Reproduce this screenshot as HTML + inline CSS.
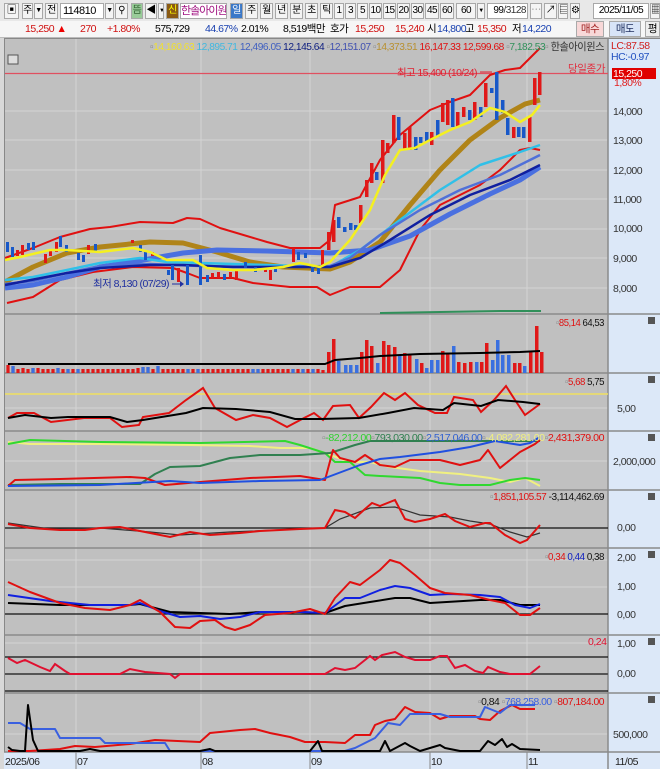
<!DOCTYPE html>
<html><head><meta charset="utf-8"><style>
*{margin:0;padding:0;box-sizing:border-box}
body{width:660px;height:769px;overflow:hidden;background:#f0f0f0;font-family:"Liberation Sans","Noto Sans CJK KR","NanumGothic",sans-serif;font-size:10.5px;letter-spacing:-0.5px;position:relative}
.a{position:absolute;white-space:nowrap;line-height:14px}
.b{position:absolute;top:3px;height:16px;border:1px solid #a8a8a8;background:#f4f4f4;text-align:center;line-height:14px;font-size:10px;overflow:hidden;white-space:nowrap}
svg{position:absolute;left:0;top:0}
svg text{font-family:"Liberation Sans","Noto Sans CJK KR",sans-serif;font-size:10.5px;letter-spacing:-0.5px}
</style></head><body>
<div style="position:absolute;left:0;top:0;width:660px;height:21px;background:#e8e8e8"></div>
<div class="b" style="left:4px;width:15px">▣</div>
<div class="b" style="left:22px;width:11px">주</div>
<div class="b" style="left:34px;width:9px;font-size:7px">▼</div>
<div class="b" style="left:45px;width:13px">전</div>
<div class="b" style="left:60px;width:44px;background:#fff;text-align:left;padding-left:2px;font-size:11px">114810</div>
<div class="b" style="left:105px;width:9px;font-size:7px">▼</div>
<div class="b" style="left:115px;width:13px">⚲</div>
<div class="b" style="left:131px;width:12px;background:#9c9;color:#363">뜸</div>
<div class="b" style="left:145px;width:12px">◀</div>
<div class="b" style="left:158px;width:6px;font-size:6px">▼</div>
<div class="b" style="left:166px;width:13px;background:#8a5a14;color:#ff0">신</div>
<div class="b" style="left:180px;width:47px;background:#fff;color:#a01080;font-size:11px;letter-spacing:-1px">한솔아이원</div>
<div class="b" style="left:230px;width:13px;background:#3a78c8;color:#fff">일</div>
<div class="b" style="left:245px;width:13px">주</div>
<div class="b" style="left:260px;width:13px">월</div>
<div class="b" style="left:275px;width:13px">년</div>
<div class="b" style="left:290px;width:13px">분</div>
<div class="b" style="left:305px;width:13px">초</div>
<div class="b" style="left:320px;width:13px">틱</div>
<div class="b" style="left:334px;width:10px">1</div>
<div class="b" style="left:345px;width:11px">3</div>
<div class="b" style="left:357px;width:11px">5</div>
<div class="b" style="left:369px;width:13px">10</div>
<div class="b" style="left:383px;width:13px">15</div>
<div class="b" style="left:397px;width:13px">20</div>
<div class="b" style="left:411px;width:13px">30</div>
<div class="b" style="left:425px;width:14px">45</div>
<div class="b" style="left:440px;width:14px">60</div>
<div class="b" style="left:456px;width:20px">60</div>
<div class="b" style="left:477px;width:8px;font-size:6px">▼</div>
<div class="b" style="left:487px;width:41px;background:#fff;text-align:right;padding-right:1px">99<span style="color:#333">/3128</span></div>
<div class="b" style="left:530px;width:12px;color:#999">⋯</div>
<div class="b" style="left:544px;width:13px">↗</div>
<div class="b" style="left:558px;width:10px">▤</div>
<div class="b" style="left:570px;width:10px">⚙</div>
<div class="b" style="left:593px;width:56px;background:#fff">2025/11/05</div>
<div class="b" style="left:650px;width:10px">▦</div>
<div style="position:absolute;left:0;top:21px;width:660px;height:17px;background:#f6f6f6;border-bottom:1px solid #bbb"></div>
<div class="a" style="left:25px;top:22px;color:#d01010">15,250 <span style="color:#e00">▲</span></div>
<div class="a" style="left:80px;top:22px;color:#d01010">270</div>
<div class="a" style="left:107px;top:22px;color:#d01010">+1.80%</div>
<div class="a" style="left:155px;top:22px">575,729</div>
<div class="a" style="left:205px;top:22px;color:#1840b0">44.67%</div>
<div class="a" style="left:241px;top:22px">2.01%</div>
<div class="a" style="left:283px;top:22px">8,519백만</div>
<div class="a" style="left:330px;top:22px">호가</div>
<div class="a" style="left:355px;top:22px;color:#d01010">15,250</div>
<div class="a" style="left:395px;top:22px;color:#d01010">15,240</div>
<div class="a" style="left:427px;top:22px">시</div>
<div class="a" style="left:437px;top:22px;color:#1840b0">14,800</div>
<div class="a" style="left:465px;top:22px">고</div>
<div class="a" style="left:477px;top:22px;color:#d01010">15,350</div>
<div class="a" style="left:512px;top:22px">저</div>
<div class="a" style="left:522px;top:22px;color:#1840b0">14,220</div>
<div class="a" style="left:576px;top:21px;width:28px;height:16px;background:#f8d8d8;border:1px solid #aaa;text-align:center;color:#a02020">매수</div>
<div class="a" style="left:609px;top:21px;width:32px;height:16px;background:#d8e4f8;border:1px solid #aaa;text-align:center;color:#203060">매도</div>
<div class="a" style="left:645px;top:21px;width:15px;height:16px;background:#eee;border:1px solid #aaa;text-align:center">평</div>

<svg width="660" height="769" viewBox="0 0 660 769" style="top:0">
<rect x="0" y="38" width="660" height="731" fill="#e0e0e0"/>
<rect x="4" y="39" width="604" height="713" fill="#c0c0c0"/>
<rect x="608" y="39" width="52" height="730" fill="#dce8f8"/>
<rect x="0" y="752" width="660" height="17" fill="#dce8f8"/>
<g stroke="#d4d4d4" stroke-width="1">
<line x1="76" y1="39" x2="76" y2="752"/><line x1="201" y1="39" x2="201" y2="752"/><line x1="310" y1="39" x2="310" y2="752"/><line x1="430" y1="39" x2="430" y2="752"/><line x1="527" y1="39" x2="527" y2="752"/>
<line x1="4" y1="111" x2="608" y2="111"/><line x1="4" y1="140" x2="608" y2="140"/><line x1="4" y1="170" x2="608" y2="170"/><line x1="4" y1="199" x2="608" y2="199"/><line x1="4" y1="229" x2="608" y2="229"/><line x1="4" y1="258" x2="608" y2="258"/><line x1="4" y1="288" x2="608" y2="288"/>
<line x1="4" y1="461" x2="608" y2="461"/><line x1="4" y1="587" x2="608" y2="587"/><line x1="4" y1="560" x2="608" y2="560"/><line x1="4" y1="643" x2="608" y2="643"/><line x1="4" y1="734" x2="608" y2="734"/><line x1="4" y1="408" x2="608" y2="408"/>
</g>
<g stroke="#8a8a8a" stroke-width="1.5">
<line x1="0" y1="314" x2="660" y2="314"/><line x1="0" y1="373" x2="660" y2="373"/><line x1="0" y1="431" x2="660" y2="431"/><line x1="0" y1="490" x2="660" y2="490"/><line x1="0" y1="548" x2="660" y2="548"/><line x1="0" y1="635" x2="660" y2="635"/><line x1="0" y1="693" x2="660" y2="693"/><line x1="0" y1="752" x2="660" y2="752"/>
<line x1="608" y1="39" x2="608" y2="769"/>
</g>
<line x1="0" y1="38.5" x2="660" y2="38.5" stroke="#888"/>
<line x1="4" y1="73.5" x2="608" y2="73.5" stroke="#e05060" stroke-width="1.3"/>
<rect x="8" y="55" width="10" height="9" fill="#ddd" stroke="#555"/>

<g fill="none" stroke-linejoin="round">
<polyline stroke="#e01010" stroke-width="2" points="5,258 33,248 60,237 90,229 110,227 140,222 173,223 187,218 200,219 220,228 267,242 290,248 320,248 330,240 335,205 360,197 380,160 400,135 430,110 450,102 470,95 490,75 505,70 520,68 540,48"/>
<polyline stroke="#e01010" stroke-width="2" points="7,303 33,297 60,280 93,272 133,267 173,268 187,273 200,278 233,278 253,283 290,287 317,287 330,295 350,287 380,287 400,270 420,230 440,205 460,195 480,185 500,170 520,150 530,148 540,150"/>
<polyline stroke="#b08418" stroke-width="5" points="5,282 33,267 67,253 100,247 150,242 183,243 217,252 250,262 283,267 330,269 350,262 380,242 410,205 440,170 470,140 500,118 525,104 540,100"/>
<polyline stroke="#4a70e0" stroke-width="5" points="5,288 33,285 67,277 100,267 133,262 160,257 183,253 217,250 267,251 330,253 370,250 410,236 450,214 490,194 520,180 540,167"/>
<polyline stroke="#30c0e8" stroke-width="2.5" points="5,280 33,277 67,270 100,263 140,258 167,262 200,263 267,265 330,267 360,250 400,220 440,190 480,165 520,152 540,145"/>
<polyline stroke="#5070d8" stroke-width="2.5" points="5,284 33,281 67,273 100,266 150,264 200,266 267,267 330,266 350,258 380,235 420,210 460,190 500,175 540,155"/>
<polyline stroke="#1020a0" stroke-width="2.5" points="5,285 67,273 100,268 150,265 183,265 233,267 283,267 330,267 360,258 390,240 430,215 470,195 510,180 540,165"/>
</g>
<g>
<g fill="#1858c8">
<rect x="6" y="242" width="3" height="10"/><rect x="11" y="247" width="3" height="10"/><rect x="27" y="243" width="3" height="7"/><rect x="32" y="242" width="3" height="8"/><rect x="59" y="236" width="3" height="11"/><rect x="65" y="245" width="3" height="7"/><rect x="77" y="253" width="3" height="7"/><rect x="82" y="255" width="3" height="7"/><rect x="94" y="244" width="3" height="8"/><rect x="139" y="245" width="3" height="7"/><rect x="144" y="250" width="3" height="10"/><rect x="167" y="270" width="3" height="5"/><rect x="171" y="265" width="3" height="15"/><rect x="186" y="265" width="3" height="20"/><rect x="199" y="255" width="3" height="30"/><rect x="206" y="275" width="3" height="7"/><rect x="223" y="274" width="3" height="6"/><rect x="244" y="262" width="3" height="6"/><rect x="254" y="267" width="3" height="5"/><rect x="274" y="268" width="3" height="4"/><rect x="297" y="252" width="3" height="8"/><rect x="304" y="253" width="3" height="5"/><rect x="311" y="265" width="3" height="7"/><rect x="317" y="268" width="3" height="6"/>
<rect x="337" y="217" width="3.5" height="11"/><rect x="343" y="227" width="3.5" height="5"/><rect x="349" y="223" width="3.5" height="7"/><rect x="354" y="225" width="3.5" height="5"/><rect x="375" y="172" width="3.5" height="8"/><rect x="397" y="117" width="3.5" height="23"/><rect x="414" y="137" width="3.5" height="13"/><rect x="419" y="137" width="3.5" height="6"/><rect x="425" y="132" width="3.5" height="10"/><rect x="436" y="120" width="3.5" height="17"/><rect x="451" y="98" width="3.5" height="29"/><rect x="468" y="110" width="3.5" height="10"/><rect x="479" y="107" width="3.5" height="10"/><rect x="490" y="88" width="3.5" height="5"/><rect x="495" y="72" width="3.5" height="48"/><rect x="501" y="100" width="3.5" height="13"/><rect x="506" y="118" width="3.5" height="17"/><rect x="517" y="127" width="3.5" height="10"/><rect x="522" y="127" width="3.5" height="11"/>
</g>
<g fill="#e01818">
<rect x="16" y="250" width="3" height="6"/><rect x="21" y="245" width="3" height="10"/><rect x="44" y="254" width="3" height="9"/><rect x="49" y="251" width="3" height="5"/><rect x="55" y="242" width="3" height="10"/><rect x="87" y="245" width="3" height="9"/><rect x="131" y="240" width="3" height="3"/><rect x="151" y="252" width="3" height="4"/><rect x="177" y="268" width="3" height="14"/><rect x="211" y="273" width="3" height="5"/><rect x="217" y="272" width="3" height="6"/><rect x="229" y="272" width="3" height="6"/><rect x="235" y="270" width="3" height="10"/><rect x="264" y="268" width="3" height="4"/><rect x="269" y="270" width="3" height="10"/><rect x="292" y="248" width="3" height="14"/><rect x="321" y="250" width="3" height="15"/><rect x="327" y="232" width="3.5" height="18"/>
<rect x="332" y="220" width="3.5" height="22"/><rect x="359" y="205" width="3.5" height="18"/><rect x="365" y="180" width="3.5" height="17"/><rect x="370" y="163" width="3.5" height="20"/><rect x="381" y="140" width="3.5" height="43"/><rect x="386" y="143" width="3.5" height="10"/><rect x="392" y="115" width="3.5" height="28"/><rect x="403" y="133" width="3.5" height="17"/><rect x="408" y="127" width="3.5" height="23"/><rect x="430" y="132" width="3.5" height="13"/><rect x="441" y="103" width="3.5" height="19"/><rect x="446" y="100" width="3.5" height="25"/><rect x="456" y="112" width="3.5" height="15"/><rect x="462" y="107" width="3.5" height="10"/><rect x="473" y="102" width="3.5" height="18"/><rect x="484" y="83" width="3.5" height="24"/><rect x="512" y="127" width="3.5" height="11"/><rect x="528" y="117" width="3.5" height="25"/><rect x="533" y="78" width="3.5" height="27"/><rect x="538" y="72" width="3.5" height="23"/>
</g>
</g>
<polyline fill="none" stroke="#f4f020" stroke-width="2.5" stroke-linejoin="round" points="5,260 20,257 50,250 67,250 100,252 133,248 150,252 167,260 193,260 207,268 233,270 253,270 283,267 300,263 320,267 330,262 350,240 370,210 385,175 400,150 415,148 430,140 450,130 470,122 490,108 505,112 520,122 532,115 540,105"/>
<text x="397" y="76" fill="#e02030" textLength="80">최고 15,400 (10/24)</text>
<line x1="480" y1="72" x2="492" y2="72" stroke="#e02030"/>
<text x="93" y="287" fill="#2030a0" textLength="76">최저 8,130 (07/29)</text>
<line x1="172" y1="284" x2="183" y2="284" stroke="#2030a0"/><path d="M180,281 L184,284 L180,287" fill="#2030a0"/>
<text x="568" y="72" fill="#e03040" textLength="37">당일종가</text>
<rect x="612" y="68" width="44" height="11" fill="#e00000"/>
<text x="613" y="77" fill="#fff">15,250</text>
<text x="614" y="86" fill="#e02020">1,80%</text>
<g fill="#333"><text x="613" y="115">14,000</text><text x="613" y="144">13,000</text><text x="613" y="174">12,000</text><text x="613" y="203">11,000</text><text x="613" y="232">10,000</text><text x="613" y="262">9,000</text><text x="613" y="292">8,000</text>
<text x="617" y="412">5,00</text><text x="613" y="465">2,000,000</text><text x="617" y="531">0,00</text><text x="617" y="561">2,00</text><text x="617" y="590">1,00</text><text x="617" y="618">0,00</text><text x="617" y="647">1,00</text><text x="617" y="677">0,00</text><text x="613" y="738">500,000</text></g>
<text x="150" y="50" textLength="454" lengthAdjust="spacingAndGlyphs"><tspan fill="#888">▫</tspan><tspan fill="#f0e030">14,160.63 </tspan><tspan fill="#40b8e0">12,895.71 </tspan><tspan fill="#4060c0">12,496.05 </tspan><tspan fill="#102080">12,145.64 </tspan><tspan fill="#888">▫</tspan><tspan fill="#4050b0">12,151.07 </tspan><tspan fill="#888">▫</tspan><tspan fill="#b89030">14,373.51 </tspan><tspan fill="#e01010">16,147.33 12,599.68 </tspan><tspan fill="#888">▫</tspan><tspan fill="#30905a">7,182.53</tspan><tspan fill="#888">▫ </tspan><tspan fill="#333">한솔아이윈스</tspan></text>
<text x="611" y="49" fill="#d02020">LC:87.58</text>
<text x="611" y="60" fill="#2050c0">HC:-0.97</text>
<polyline fill="none" stroke="#30905a" stroke-width="2" points="380,313 440,312 500,311 541,311"/>
<g fill="#e01818">
<rect x="327" y="352" width="3.5" height="21"/><rect x="332" y="339" width="3.5" height="34"/><rect x="360" y="352" width="3.5" height="21"/><rect x="365" y="340" width="3.5" height="33"/><rect x="370" y="346" width="3.5" height="27"/><rect x="382" y="341" width="3.5" height="32"/><rect x="387" y="345" width="3.5" height="28"/><rect x="393" y="347" width="3.5" height="26"/><rect x="403" y="353" width="3.5" height="20"/><rect x="408" y="354" width="3.5" height="19"/><rect x="420" y="363" width="3.5" height="10"/><rect x="441" y="351" width="3.5" height="22"/><rect x="446" y="353" width="3.5" height="20"/><rect x="457" y="362" width="3.5" height="11"/><rect x="463" y="363" width="3.5" height="10"/><rect x="469" y="362" width="3.5" height="11"/><rect x="480" y="362" width="3.5" height="11"/><rect x="485" y="343" width="3.5" height="30"/><rect x="513" y="363" width="3.5" height="10"/><rect x="518" y="363" width="3.5" height="10"/><rect x="529" y="352" width="3.5" height="21"/><rect x="535" y="326" width="3.5" height="47"/><rect x="540" y="352" width="3.5" height="21"/>
</g>
<g fill="#3a70e0">
<rect x="337" y="361" width="3.5" height="12"/><rect x="344" y="365" width="3.5" height="8"/><rect x="349" y="365" width="3.5" height="8"/><rect x="355" y="365" width="3.5" height="8"/><rect x="376" y="363" width="3.5" height="10"/><rect x="398" y="355" width="3.5" height="18"/><rect x="415" y="359" width="3.5" height="14"/><rect x="425" y="368" width="3.5" height="5"/><rect x="430" y="360" width="3.5" height="13"/><rect x="436" y="360" width="3.5" height="13"/><rect x="452" y="346" width="3.5" height="27"/><rect x="475" y="362" width="3.5" height="11"/><rect x="491" y="360" width="3.5" height="13"/><rect x="496" y="340" width="3.5" height="33"/><rect x="501" y="355" width="3.5" height="18"/><rect x="507" y="355" width="3.5" height="18"/><rect x="523" y="366" width="3.5" height="7"/>
</g>
<g>
<path d="M8,373V365M13,373V366M18,373V369M23,373V368M28,373V369M33,373V368M38,373V368M43,373V369M48,373V369M53,373V369M58,373V368M63,373V369M68,373V369M73,373V369M78,373V369M83,373V369M88,373V369M93,373V369M98,373V369M103,373V369M108,373V369M113,373V369M118,373V369M123,373V369M128,373V369M133,373V369M138,373V368M143,373V367M148,373V367M153,373V369M158,373V366M163,373V369M168,373V369M173,373V369M178,373V369M183,373V369M188,373V369M193,373V369M198,373V369M203,373V369M208,373V369M213,373V369M218,373V369M223,373V369M228,373V369M233,373V369M238,373V369M243,373V369M248,373V369M253,373V369M258,373V369M263,373V369M268,373V369M273,373V369M278,373V369M283,373V369M288,373V369M293,373V369M298,373V369M303,373V369M308,373V369M313,373V369M318,373V369M323,373V370" stroke="#e01818" stroke-width="3.2"/>
<path d="M13,373V366M33,373V368M58,373V368M68,373V369M78,373V369M143,373V367M148,373V367M158,373V366M188,373V369M198,373V369M253,373V369M258,373V369M293,373V369M303,373V369M313,373V369" stroke="#3a70e0" stroke-width="3.2"/>
</g>
<polyline fill="none" stroke="#000" stroke-width="2" points="8,364 325,364 335,360 360,358 380,356 420,354 480,353 520,352 540,351"/>
<text x="556" y="326" textLength="48" lengthAdjust="spacingAndGlyphs"><tspan fill="#888">▫</tspan><tspan fill="#e01010">85,14</tspan><tspan fill="#111"> 64,53</tspan></text>
<line x1="4" y1="394" x2="608" y2="394" stroke="#f0e060" stroke-width="1.5"/>
<polyline fill="none" stroke="#e01010" stroke-width="2" points="8,418 17,413 34,413 51,422 84,418 110,418 122,427 139,425 143,417 169,413 186,400 203,388 215,408 236,420 253,415 270,418 287,427 304,418 314,413 323,420 333,406 350,405 359,418 371,407 384,393 395,400 405,393 418,405 435,413 447,413 454,397 473,400 481,412 494,400 506,386 515,400 525,415 540,404"/>
<polyline fill="none" stroke="#000" stroke-width="2" points="8,418 25,415 51,418 68,417 110,417 127,422 143,420 186,413 203,408 236,409 270,412 295,419 321,419 359,418 388,413 414,408 443,410 454,403 481,406 498,400 523,402 540,404"/>
<text x="565" y="385" textLength="39" lengthAdjust="spacingAndGlyphs"><tspan fill="#888">▫</tspan><tspan fill="#e01010">5,68</tspan><tspan fill="#111"> 5,75</tspan></text>
<g fill="none" stroke-width="2" stroke-linejoin="round">
<polyline stroke="#f0f080" points="8,442 30,444 100,444 190,445 250,446 280,448 310,448 330,455 350,462 370,462 390,467 420,471 460,474 490,478 510,482 525,478 540,486"/>
<polyline stroke="#30d830" points="8,444 30,440 100,442 200,443 285,441 300,445 325,453 335,462 350,462 365,475 380,476 420,478 440,483 460,485 490,485 510,480 525,478 540,480"/>
<polyline stroke="#308050" points="8,485 60,484 140,484 155,474 170,467 200,466 230,458 260,455 300,455 330,453 355,445 370,441 400,441 450,441 500,441 540,441"/>
<polyline stroke="#e01010" points="8,486 15,480 60,479 130,477 145,478 165,485 200,482 250,478 300,476 325,480 333,450 340,458 355,462 365,455 380,465 395,467 410,460 440,460 460,465 480,460 488,450 500,468 520,452 535,444 540,440"/>
<polyline stroke="#2050e0" points="8,486 100,485 170,481 200,483 260,481 320,480 360,465 380,459 400,457 440,452 470,447 495,441 520,445 530,443 540,437"/>
</g>
<text x="322" y="441" textLength="282" lengthAdjust="spacingAndGlyphs"><tspan fill="#888">▫</tspan><tspan fill="#30d030">-82,212.00</tspan><tspan fill="#888">▫</tspan><tspan fill="#308050">793,030.00</tspan><tspan fill="#888">▫</tspan><tspan fill="#3060d0">2,517,046.00</tspan><tspan fill="#888">▫</tspan><tspan fill="#f0f080">-4,082,281.00</tspan><tspan fill="#888">▫</tspan><tspan fill="#e01010">2,431,379.00</tspan></text>
<line x1="4" y1="528" x2="608" y2="528" stroke="#111" stroke-width="1.3"/>
<polyline fill="none" stroke="#333" stroke-width="1.2" points="8,523 50,529 100,528 150,532 180,535 230,532 300,529 325,528 340,519 370,508 395,507 420,515 450,517 470,521 490,524 510,532 527,537 540,533"/>
<polyline fill="none" stroke="#e01010" stroke-width="2" points="8,524 30,528 60,530 85,530 100,528 120,527 140,531 170,537 190,532 210,535 240,533 260,531 300,529 325,528 335,510 345,512 355,518 365,509 372,503 380,506 395,500 405,519 415,522 430,519 445,514 455,521 470,527 485,523 490,523 505,535 520,543 527,540 540,525"/>
<text x="490" y="500" textLength="114" lengthAdjust="spacingAndGlyphs"><tspan fill="#888">▫</tspan><tspan fill="#e01010">1,851,105.57</tspan><tspan fill="#111"> -3,114,462.69</tspan></text>
<line x1="4" y1="614" x2="608" y2="614" stroke="#111" stroke-width="1.3"/>
<g fill="none" stroke-width="2" stroke-linejoin="round">
<polyline stroke="#000" points="8,603 60,605 130,605 140,604 170,612 200,613 230,614 260,612 300,612 325,613 345,606 370,602 395,598 410,598 430,603 480,600 500,600 520,605 540,605"/>
<polyline stroke="#1020e0" points="8,595 50,601 90,605 130,605 140,603 160,611 180,617 200,616 220,619 240,617 260,612 300,612 325,613 345,598 360,598 380,590 395,586 410,588 430,595 450,594 480,595 500,597 515,605 530,608 540,604"/>
<polyline stroke="#e01010" points="8,582 30,592 60,603 85,608 110,610 130,605 140,600 160,612 175,627 190,628 200,621 215,620 225,627 235,630 250,625 265,615 290,613 310,609 325,614 335,598 350,582 360,585 380,570 390,560 400,563 415,575 430,588 445,593 470,595 490,600 505,603 520,615 530,615 540,608"/>
</g>
<text x="545" y="560" textLength="59" lengthAdjust="spacingAndGlyphs"><tspan fill="#888">▫</tspan><tspan fill="#e01010">0,34 </tspan><tspan fill="#1020c0">0,44 </tspan><tspan fill="#111">0,38</tspan></text>
<line x1="4" y1="657" x2="608" y2="657" stroke="#111" stroke-width="1.3"/>
<line x1="4" y1="674" x2="608" y2="674" stroke="#555" stroke-width="2"/>
<line x1="4" y1="691" x2="608" y2="691" stroke="#111" stroke-width="1.3"/>
<polyline fill="none" stroke="#e01030" stroke-width="2" points="8,658 17,663 25,660 40,667 50,671 55,664 65,671 70,674 120,674 130,669 145,672 170,674 175,678 180,674 325,674 335,668 345,670 355,668 365,660 370,656 375,660 382,655 395,652 405,657 415,660 430,660 440,656 447,656 455,668 465,665 475,671 483,673 488,667 500,672 510,674 530,674 540,666"/>
<text x="588" y="645" fill="#e01030">0,24</text>
<g fill="none" stroke-width="2" stroke-linejoin="round">
<polyline stroke="#e01010" points="8,751 30,751 60,749 75,746 95,747 130,744 155,740 200,742 210,733 240,730 255,729 270,733 290,737 305,742 325,742 345,743 355,735 370,735 375,725 385,721 395,719 405,707 415,712 430,713 440,719 450,716 475,716 480,719 490,720 500,711 512,705 520,709 535,709"/>
<polyline stroke="#3a60e0" points="8,723 20,723 30,729 55,729 60,738 100,738 105,743 165,743 170,751 310,751 345,751 355,748 375,738 388,723 400,725 410,714 440,714 450,717 480,717 485,707 500,713 510,705 530,705 535,705"/>
<polyline stroke="#000" points="8,747 12,750 20,751 25,751 28,705 33,740 38,751 80,751 90,749 100,751 200,751 210,749 215,751 310,751 318,741 322,751 380,751 385,741 390,751 405,743 410,746 420,751 440,745 445,748 460,751 480,751 488,741 495,745 502,739 507,747 512,744 520,749 540,750"/>
</g>
<text x="478" y="705" textLength="126" lengthAdjust="spacingAndGlyphs"><tspan fill="#888">▫</tspan><tspan fill="#111">0,84 </tspan><tspan fill="#888">▫</tspan><tspan fill="#3a60e0">768,258.00 </tspan><tspan fill="#888">▫</tspan><tspan fill="#e01010">807,184.00</tspan></text>
<g fill="#555"><rect x="648" y="317" width="7" height="7"/><rect x="648" y="376" width="7" height="7"/><rect x="648" y="434" width="7" height="7"/><rect x="648" y="493" width="7" height="7"/><rect x="648" y="551" width="7" height="7"/><rect x="648" y="638" width="7" height="7"/><rect x="648" y="696" width="7" height="7"/></g>
<g fill="#222"><text x="5" y="765">2025/06</text><text x="77" y="765">07</text><text x="202" y="765">08</text><text x="311" y="765">09</text><text x="431" y="765">10</text><text x="528" y="765">11</text><text x="615" y="765">11/05</text></g>
<g stroke="#888"><line x1="76" y1="752" x2="76" y2="769"/><line x1="201" y1="752" x2="201" y2="769"/><line x1="310" y1="752" x2="310" y2="769"/><line x1="430" y1="752" x2="430" y2="769"/><line x1="527" y1="752" x2="527" y2="769"/></g>
<rect x="0" y="38" width="4" height="731" fill="#d8d8d8"/>
<line x1="4.5" y1="39" x2="4.5" y2="752" stroke="#888"/>
</svg>
</body></html>
